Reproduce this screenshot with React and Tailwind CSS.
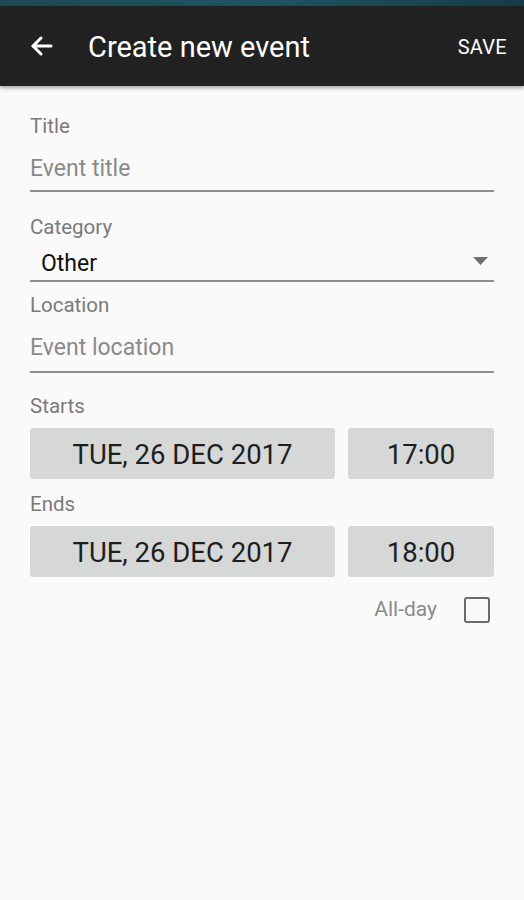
import React from 'react';

function Label({ children, className = '' }) {
  return (
    <div className={`h-[24px] text-[20.5px] leading-[24px] text-[#7a7a7a] ${className}`}>{children}</div>
  );
}

function PickerButton({ children, className = '' }) {
  return (
    <div className={`h-[51px] pt-[2px] flex items-center justify-center rounded-[3px] bg-[#d6d7d7] text-[27.5px] text-[#1e1e1e] ${className}`}>
      {children}
    </div>
  );
}

export default function App() {
  return (
    <div className="w-[524px] h-[900px] bg-[#fafafa] font-['Roboto',sans-serif] overflow-hidden">
      {/* status bar strip */}
      <div className="h-[6px] bg-gradient-to-r from-[#1d4a55] via-[#1f5563] to-[#173c48]"></div>

      {/* Toolbar */}
      <header className="h-[80px] bg-[#212121] flex items-center pl-[30px] pr-[17px] shadow-[0_2px_4px_rgba(0,0,0,0.35)] relative">
        <svg width="23" height="22" viewBox="0 0 23 22" fill="none" stroke="white" strokeWidth="3" strokeLinecap="round" strokeLinejoin="round">
          <path d="M21 11H3" />
          <path d="M11 3L3 11l8 8" />
        </svg>
        <h1 className="ml-[35px] pt-[2px] text-[29px] text-white leading-none">Create new event</h1>
        <span className="ml-auto pt-[2px] text-[20px] text-white tracking-[0.3px]">SAVE</span>
      </header>

      <main className="px-[30px]">
        <Label className="mt-[28px]">Title</Label>
        <div className="h-[54px] pt-[11px] flex items-center border-b-2 border-[#8f8f8f] text-[23px] text-[#8a8a8a]">
          Event title
        </div>

        <Label className="mt-[23px]">Category</Label>
        <div className="h-[43px] pt-[9px] flex items-center border-b-2 border-[#8f8f8f]">
          <span className="ml-[11px] text-[23px] text-[#111]">Other</span>
          <svg className="ml-auto mr-[6px] mb-[6px]" width="15" height="8" viewBox="0 0 15 8">
            <path d="M0 0h15L7.5 8z" fill="#6f6f6f" />
          </svg>
        </div>

        <Label className="mt-[11px]">Location</Label>
        <div className="h-[56px] pt-[8px] flex items-center border-b-2 border-[#8f8f8f] text-[23px] text-[#8a8a8a]">
          Event location
        </div>

        <Label className="mt-[21px]">Starts</Label>
        <div className="mt-[10px] flex gap-[13px]">
          <PickerButton className="w-[305px]">TUE, 26 DEC 2017</PickerButton>
          <PickerButton className="flex-1">17:00</PickerButton>
        </div>

        <Label className="mt-[13px]">Ends</Label>
        <div className="mt-[10px] flex gap-[13px]">
          <PickerButton className="w-[305px]">TUE, 26 DEC 2017</PickerButton>
          <PickerButton className="flex-1">18:00</PickerButton>
        </div>

        <div className="mt-[20px] h-[26px] flex items-center justify-end pr-[4px]">
          <span className="text-[21px] text-[#8a8a8a]">All-day</span>
          <div className="ml-[27px] w-[26px] h-[26px] border-2 border-[#6a6a6a] rounded-[3px]"></div>
        </div>
      </main>
    </div>
  );
}
